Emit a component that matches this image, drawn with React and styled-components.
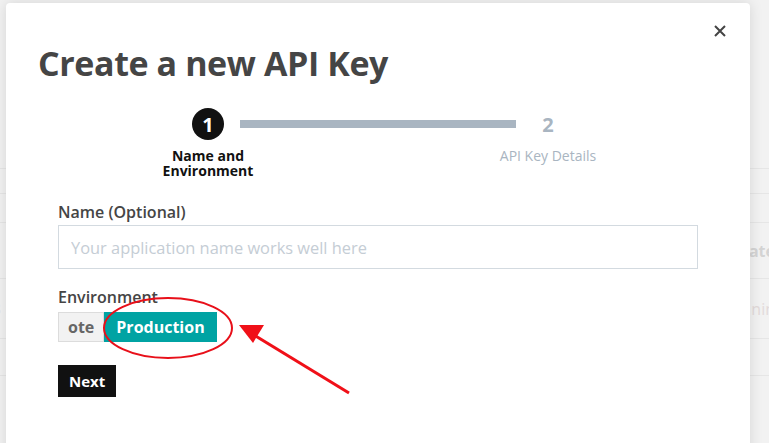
import React from 'react'
import styled, { createGlobalStyle } from 'styled-components'

const GlobalStyle = createGlobalStyle`
  html, body {
    margin: 0;
    padding: 0;
    background: #f2f2f2;
    font-family: 'Open Sans', 'Noto Sans', sans-serif;
  }
  #root {
    position: relative;
    width: 769px;
    height: 443px;
    overflow: hidden;
  }
`

const Backdrop = styled.div`
  padding-top: 168px;
  display: flex;
  flex-direction: column;
`

const BackRow = styled.div`
  height: ${p => p.h}px;
  border-top: 1px solid #e6e6e6;
  display: flex;
  justify-content: space-between;
  align-items: center;
  color: ${p => p.color || '#d8d8d8'};
  font-weight: ${p => (p.bold ? 700 : 400)};
  font-size: 16px;
  box-sizing: border-box;
`

const BackLeft = styled.span`
  margin-left: -8px;
`

const BackRight = styled.span`
  margin-right: -6px;
`

const Modal = styled.div`
  position: absolute;
  top: 3px;
  left: 6px;
  width: 744px;
  height: 460px;
  background: #fff;
  border-radius: 4px;
  box-shadow: 0 0 14px rgba(0, 0, 0, 0.12);
  padding: 40px 52px 0;
  box-sizing: border-box;
`

const Close = styled.button`
  position: absolute;
  top: 16px;
  right: 18px;
  width: 24px;
  height: 24px;
  border: 0;
  background: none;
  padding: 0;
  display: flex;
  align-items: center;
  justify-content: center;
  cursor: pointer;
`

const Title = styled.h1`
  margin: 0 0 0 -20px;
  font-size: 34px;
  line-height: 40px;
  font-weight: 700;
  color: #454545;
  letter-spacing: -0.4px;
`

const Stepper = styled.div`
  display: flex;
  justify-content: center;
  margin-top: 25px;
  height: 93px;
`

const Step = styled.div`
  width: 32px;
  display: flex;
  flex-direction: column;
  align-items: center;
`

const Circle = styled.div`
  width: 32px;
  height: 32px;
  border-radius: 50%;
  background: ${p => (p.active ? '#111' : 'transparent')};
  color: ${p => (p.active ? '#fff' : '#a9b5c1')};
  font-weight: 700;
  font-size: 20px;
  display: flex;
  align-items: center;
  justify-content: center;
  flex-shrink: 0;
`

const StepLabel = styled.div`
  margin-top: 8px;
  text-align: center;
  white-space: nowrap;
  font-size: 14px;
  line-height: 15px;
  font-weight: ${p => (p.active ? 700 : 400)};
  color: ${p => (p.active ? '#111' : '#a9b5c1')};
`

const Bar = styled.div`
  width: 276px;
  height: 8px;
  margin: 12px 16px 0;
  background: #a9b5c1;
`

const Label = styled.label`
  display: block;
  font-size: 16px;
  font-weight: 600;
  color: #454545;
  line-height: 22px;
  margin-bottom: 2px;
`

const Input = styled.input`
  display: block;
  width: 100%;
  height: 44px;
  box-sizing: border-box;
  border: 1px solid #d3dae0;
  border-radius: 0;
  padding: 0 12px;
  font-family: inherit;
  font-size: 16.4px;
  color: #333;
  outline: none;
  margin-bottom: 17px;
  &::placeholder {
    color: #c5cdd5;
  }
`

const Toggle = styled.div`
  display: flex;
  margin: 4px 0 23px;
`

const Segment = styled.button`
  height: 30px;
  border: 1px solid ${p => (p.active ? '#00a3a3' : '#dcdcdc')};
  background: ${p => (p.active ? '#00a3a3' : '#f2f2f2')};
  color: ${p => (p.active ? '#fff' : '#666')};
  font-family: inherit;
  font-weight: 700;
  font-size: 16px;
  padding: 0 ${p => (p.active ? 11 : 9)}px;
  cursor: pointer;
`

const NextButton = styled.button`
  background: #111;
  color: #fff;
  border: 0;
  height: 32px;
  padding: 0 11px;
  font-family: inherit;
  font-weight: 700;
  font-size: 15px;
  cursor: pointer;
`

const Annotation = styled.svg`
  position: absolute;
  left: 0;
  top: 0;
  pointer-events: none;
`

const App = () => {
  return (
    <>
      <GlobalStyle />
      <Backdrop>
        <BackRow h={25} />
        <BackRow h={29} />
        <BackRow h={56} bold color='#d4d4d4'>
          <BackLeft>‹</BackLeft>
          <BackRight>ate</BackRight>
        </BackRow>
        <BackRow h={60} color='#e2dada'>
          <BackLeft>3</BackLeft>
          <BackRight>nin</BackRight>
        </BackRow>
        <BackRow h={37} />
        <BackRow h={80} />
      </Backdrop>
      <Modal>
        <Close aria-label='Close'>
          <svg width='12' height='12' viewBox='0 0 12 12'>
            <path d='M1 1 L11 11 M11 1 L1 11' stroke='#444' strokeWidth='2' />
          </svg>
        </Close>
        <Title>Create a new API Key</Title>
        <Stepper>
          <Step>
            <Circle active>1</Circle>
            <StepLabel active>
              Name and
              <br />
              Environment
            </StepLabel>
          </Step>
          <Bar />
          <Step>
            <Circle>2</Circle>
            <StepLabel>API Key Details</StepLabel>
          </Step>
        </Stepper>
        <Label>Name (Optional)</Label>
        <Input placeholder='Your application name works well here' />
        <Label>Environment</Label>
        <Toggle>
          <Segment>ote</Segment>
          <Segment active>Production</Segment>
        </Toggle>
        <NextButton>Next</NextButton>
      </Modal>
      <Annotation width='769' height='443'>
        <ellipse cx='168' cy='328' rx='64' ry='30' fill='none' stroke='#e8101a' strokeWidth='2' />
        <line x1='349' y1='393' x2='254' y2='335' stroke='#f01018' strokeWidth='3' />
        <polygon points='239,325 264,325 253,343' fill='#f01018' />
      </Annotation>
    </>
  )
}

export default App
